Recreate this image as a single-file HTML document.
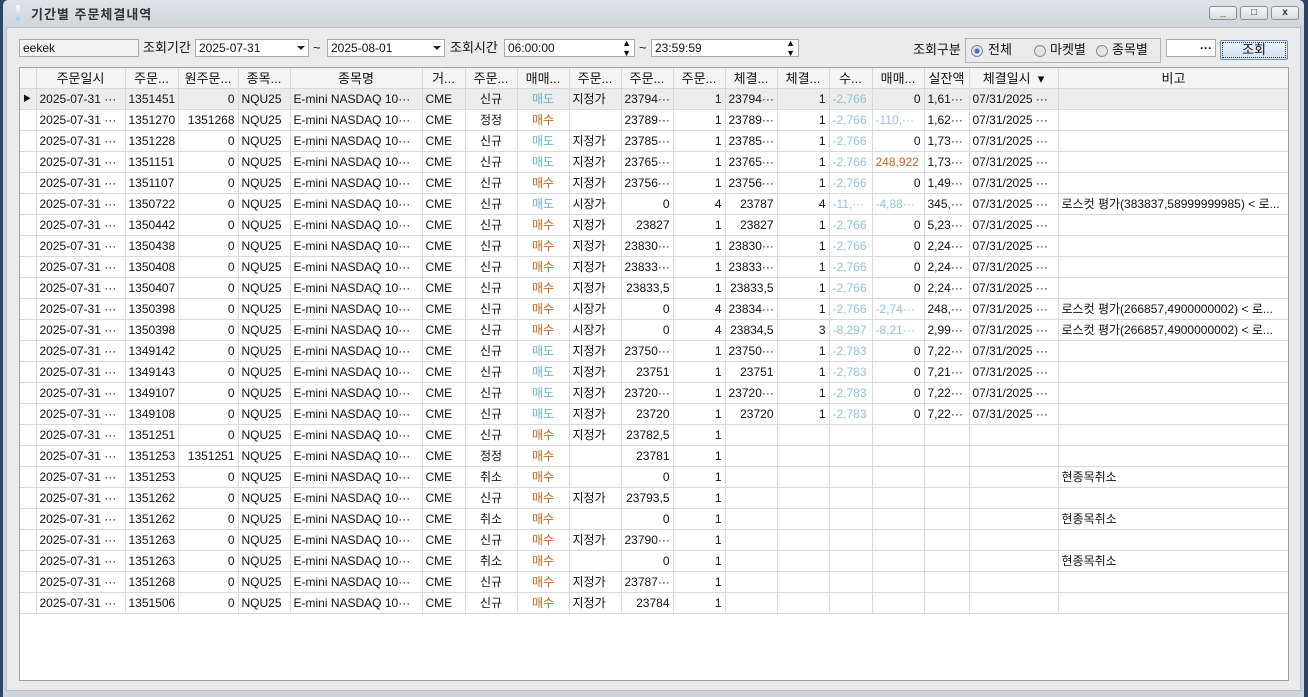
<!DOCTYPE html>
<html><head><meta charset="utf-8"><style>
*{box-sizing:border-box;margin:0;padding:0}
body{width:1308px;height:697px;overflow:hidden;background:#2c4467;font-family:"Liberation Sans","Noto Sans CJK KR",sans-serif;font-size:12px;color:#111;position:relative}
.win{position:absolute;left:3px;top:0;width:1301px;height:697px;background:linear-gradient(#dfe3e8,#cfd5dc 27px,#cfd5dc);border-radius:5px 5px 0 0}
.title{position:absolute;left:28px;top:4px;font-size:13px;font-weight:bold;color:#333;letter-spacing:1px}
.ico{position:absolute;left:13px;top:5px;width:4px;height:16px;background:linear-gradient(#fff,#9cc8ea);border-radius:2px}
.body{position:absolute;left:6px;top:27px;width:1295px;height:664px;background:#ebebeb;border:1px solid #b8bec6}
.wb{position:absolute;top:6px;width:28px;height:14px;border:1px solid #8a8f96;border-radius:3px;background:linear-gradient(#f4f5f6,#d8dbdf);font-size:10px;text-align:center;line-height:12px;color:#333;font-weight:bold}
.abs{position:absolute}
.inp{position:absolute;height:18px;border:1px solid #a8acb2;background:#fff;padding-left:3px;line-height:16px}
.lbl{position:absolute;font-size:13px;line-height:18px}
.dd{position:absolute;right:3px;top:6px;width:0;height:0;border-left:4px solid transparent;border-right:4px solid transparent;border-top:4px solid #222}
.grid{position:absolute;left:19px;top:67px;width:1270px;height:614px;background:#fff;border:1px solid #a0a0a0;overflow:hidden}
table{border-collapse:collapse;table-layout:fixed;width:1269px;margin-top:-1px}
td,th{height:21px;border-right:1px solid #d9d9d9;border-bottom:1px solid #d9d9d9;white-space:nowrap;overflow:hidden;padding:0 3px;font-weight:normal}
th{background:#f4f4f4;font-size:13px;height:21px;text-align:center}
td{text-align:left;font-size:12px}
.r{text-align:right}.c{text-align:center}
.b{color:#69b3d1}.o{color:#c8641e}.l{color:#8fc3d8}
tr.sel td{background:#ececec}
</style></head><body>
<div class="win">
<div class="ico"></div><div class="title">기간별 주문체결내역</div>
<div class="wb" style="left:1206px">_</div><div class="wb" style="left:1237px">□</div><div class="wb" style="left:1268px">x</div>
</div>
<div class="body"></div>
<div class="inp" style="left:19px;top:39px;width:120px;background:#f3f3f3">eekek</div>
<div class="lbl" style="left:143px;top:39px">조회기간</div>
<div class="inp" style="left:195px;top:39px;width:114px">2025-07-31<div class="dd"></div></div>
<div class="lbl" style="left:313px;top:39px">~</div>
<div class="inp" style="left:327px;top:39px;width:118px">2025-08-01<div class="dd"></div></div>
<div class="lbl" style="left:450px;top:39px">조회시간</div>
<div class="inp" style="left:504px;top:39px;width:131px">06:00:00<span class="abs" style="right:3px;top:-2px;font-size:9px;line-height:10px">▲<br>▼</span></div>
<div class="lbl" style="left:639px;top:39px">~</div>
<div class="inp" style="left:651px;top:39px;width:148px">23:59:59<span class="abs" style="right:3px;top:-2px;font-size:9px;line-height:10px">▲<br>▼</span></div>
<div class="lbl" style="left:913px;top:41px">조회구분</div>
<div class="abs" style="left:965px;top:38px;width:196px;height:25px;border:1px solid #b0b4ba;background:#ebebeb"></div>
<div class="abs" style="left:971px;top:45px;width:12px;height:12px;border-radius:50%;border:1px solid #7a8594;background:radial-gradient(#3d6fc0 2px,#dfe6f2 3px)"></div>
<div class="lbl" style="left:988px;top:41px">전체</div>
<div class="abs" style="left:1034px;top:45px;width:12px;height:12px;border-radius:50%;border:1px solid #8a8f96;background:#e4e4e4"></div>
<div class="lbl" style="left:1050px;top:41px">마켓별</div>
<div class="abs" style="left:1096px;top:45px;width:12px;height:12px;border-radius:50%;border:1px solid #8a8f96;background:#e4e4e4"></div>
<div class="lbl" style="left:1112px;top:41px">종목별</div>
<div class="inp" style="left:1166px;top:39px;width:50px;text-align:right;padding-right:3px;font-weight:bold">···</div>
<div class="abs" style="left:1220px;top:40px;width:68px;height:20px;border:1px solid #6f8fb5;border-radius:2px;background:linear-gradient(#eef4fb,#d3e0f0);text-align:center;font-size:13px;line-height:18px;outline:1px dotted #333;outline-offset:-3px">조회</div>
<div class="grid"><table>
<colgroup><col style="width:16px"><col style="width:89px"><col style="width:53px"><col style="width:60px"><col style="width:52px"><col style="width:132px"><col style="width:43px"><col style="width:52px"><col style="width:52px"><col style="width:52px"><col style="width:52px"><col style="width:52px"><col style="width:52px"><col style="width:52px"><col style="width:43px"><col style="width:52px"><col style="width:45px"><col style="width:89px"><col style="width:231px"></colgroup>
<tr><th></th><th>주문일시</th><th>주문...</th><th>원주문...</th><th>종목...</th><th>종목명</th><th>거...</th><th>주문...</th><th>매매...</th><th>주문...</th><th>주문...</th><th>주문...</th><th>체결...</th><th>체결...</th><th>수...</th><th>매매...</th><th>실잔액</th><th>체결일시 &nbsp;▾</th><th>비고</th></tr>
<tr class="sel"><td style="font-size:8px">▶</td><td>2025-07-31 ···</td><td>1351451</td><td class="r">0</td><td>NQU25</td><td>E-mini NASDAQ 10···</td><td>CME</td><td class="c">신규</td><td class="c b">매도</td><td>지정가</td><td>23794···</td><td class="r">1</td><td>23794···</td><td class="r">1</td><td class="l">-2,766</td><td class="r">0</td><td>1,61···</td><td>07/31/2025 ···</td><td></td></tr>
<tr><td></td><td>2025-07-31 ···</td><td>1351270</td><td class="r">1351268</td><td>NQU25</td><td>E-mini NASDAQ 10···</td><td>CME</td><td class="c">정정</td><td class="c o">매수</td><td></td><td class="r">23789···</td><td class="r">1</td><td>23789···</td><td class="r">1</td><td class="l">-2,766</td><td class="l">-110,···</td><td>1,62···</td><td>07/31/2025 ···</td><td></td></tr>
<tr><td></td><td>2025-07-31 ···</td><td>1351228</td><td class="r">0</td><td>NQU25</td><td>E-mini NASDAQ 10···</td><td>CME</td><td class="c">신규</td><td class="c b">매도</td><td>지정가</td><td>23785···</td><td class="r">1</td><td>23785···</td><td class="r">1</td><td class="l">-2,766</td><td class="r">0</td><td>1,73···</td><td>07/31/2025 ···</td><td></td></tr>
<tr><td></td><td>2025-07-31 ···</td><td>1351151</td><td class="r">0</td><td>NQU25</td><td>E-mini NASDAQ 10···</td><td>CME</td><td class="c">신규</td><td class="c b">매도</td><td>지정가</td><td>23765···</td><td class="r">1</td><td>23765···</td><td class="r">1</td><td class="l">-2,766</td><td class="o">248,922</td><td>1,73···</td><td>07/31/2025 ···</td><td></td></tr>
<tr><td></td><td>2025-07-31 ···</td><td>1351107</td><td class="r">0</td><td>NQU25</td><td>E-mini NASDAQ 10···</td><td>CME</td><td class="c">신규</td><td class="c o">매수</td><td>지정가</td><td>23756···</td><td class="r">1</td><td>23756···</td><td class="r">1</td><td class="l">-2,766</td><td class="r">0</td><td>1,49···</td><td>07/31/2025 ···</td><td></td></tr>
<tr><td></td><td>2025-07-31 ···</td><td>1350722</td><td class="r">0</td><td>NQU25</td><td>E-mini NASDAQ 10···</td><td>CME</td><td class="c">신규</td><td class="c b">매도</td><td>시장가</td><td class="r">0</td><td class="r">4</td><td class="r">23787</td><td class="r">4</td><td class="l">-11,···</td><td class="l">-4,88···</td><td>345,···</td><td>07/31/2025 ···</td><td>로스컷 평가(383837,58999999985) &lt; 로...</td></tr>
<tr><td></td><td>2025-07-31 ···</td><td>1350442</td><td class="r">0</td><td>NQU25</td><td>E-mini NASDAQ 10···</td><td>CME</td><td class="c">신규</td><td class="c o">매수</td><td>지정가</td><td class="r">23827</td><td class="r">1</td><td class="r">23827</td><td class="r">1</td><td class="l">-2,766</td><td class="r">0</td><td>5,23···</td><td>07/31/2025 ···</td><td></td></tr>
<tr><td></td><td>2025-07-31 ···</td><td>1350438</td><td class="r">0</td><td>NQU25</td><td>E-mini NASDAQ 10···</td><td>CME</td><td class="c">신규</td><td class="c o">매수</td><td>지정가</td><td>23830···</td><td class="r">1</td><td>23830···</td><td class="r">1</td><td class="l">-2,766</td><td class="r">0</td><td>2,24···</td><td>07/31/2025 ···</td><td></td></tr>
<tr><td></td><td>2025-07-31 ···</td><td>1350408</td><td class="r">0</td><td>NQU25</td><td>E-mini NASDAQ 10···</td><td>CME</td><td class="c">신규</td><td class="c o">매수</td><td>지정가</td><td>23833···</td><td class="r">1</td><td>23833···</td><td class="r">1</td><td class="l">-2,766</td><td class="r">0</td><td>2,24···</td><td>07/31/2025 ···</td><td></td></tr>
<tr><td></td><td>2025-07-31 ···</td><td>1350407</td><td class="r">0</td><td>NQU25</td><td>E-mini NASDAQ 10···</td><td>CME</td><td class="c">신규</td><td class="c o">매수</td><td>지정가</td><td class="r">23833,5</td><td class="r">1</td><td class="r">23833,5</td><td class="r">1</td><td class="l">-2,766</td><td class="r">0</td><td>2,24···</td><td>07/31/2025 ···</td><td></td></tr>
<tr><td></td><td>2025-07-31 ···</td><td>1350398</td><td class="r">0</td><td>NQU25</td><td>E-mini NASDAQ 10···</td><td>CME</td><td class="c">신규</td><td class="c o">매수</td><td>시장가</td><td class="r">0</td><td class="r">4</td><td>23834···</td><td class="r">1</td><td class="l">-2,766</td><td class="l">-2,74···</td><td>248,···</td><td>07/31/2025 ···</td><td>로스컷 평가(266857,4900000002) &lt; 로...</td></tr>
<tr><td></td><td>2025-07-31 ···</td><td>1350398</td><td class="r">0</td><td>NQU25</td><td>E-mini NASDAQ 10···</td><td>CME</td><td class="c">신규</td><td class="c o">매수</td><td>시장가</td><td class="r">0</td><td class="r">4</td><td class="r">23834,5</td><td class="r">3</td><td class="l">-8,297</td><td class="l">-8,21···</td><td>2,99···</td><td>07/31/2025 ···</td><td>로스컷 평가(266857,4900000002) &lt; 로...</td></tr>
<tr><td></td><td>2025-07-31 ···</td><td>1349142</td><td class="r">0</td><td>NQU25</td><td>E-mini NASDAQ 10···</td><td>CME</td><td class="c">신규</td><td class="c b">매도</td><td>지정가</td><td>23750···</td><td class="r">1</td><td>23750···</td><td class="r">1</td><td class="l">-2,783</td><td class="r">0</td><td>7,22···</td><td>07/31/2025 ···</td><td></td></tr>
<tr><td></td><td>2025-07-31 ···</td><td>1349143</td><td class="r">0</td><td>NQU25</td><td>E-mini NASDAQ 10···</td><td>CME</td><td class="c">신규</td><td class="c b">매도</td><td>지정가</td><td class="r">23751</td><td class="r">1</td><td class="r">23751</td><td class="r">1</td><td class="l">-2,783</td><td class="r">0</td><td>7,21···</td><td>07/31/2025 ···</td><td></td></tr>
<tr><td></td><td>2025-07-31 ···</td><td>1349107</td><td class="r">0</td><td>NQU25</td><td>E-mini NASDAQ 10···</td><td>CME</td><td class="c">신규</td><td class="c b">매도</td><td>지정가</td><td>23720···</td><td class="r">1</td><td>23720···</td><td class="r">1</td><td class="l">-2,783</td><td class="r">0</td><td>7,22···</td><td>07/31/2025 ···</td><td></td></tr>
<tr><td></td><td>2025-07-31 ···</td><td>1349108</td><td class="r">0</td><td>NQU25</td><td>E-mini NASDAQ 10···</td><td>CME</td><td class="c">신규</td><td class="c b">매도</td><td>지정가</td><td class="r">23720</td><td class="r">1</td><td class="r">23720</td><td class="r">1</td><td class="l">-2,783</td><td class="r">0</td><td>7,22···</td><td>07/31/2025 ···</td><td></td></tr>
<tr><td></td><td>2025-07-31 ···</td><td>1351251</td><td class="r">0</td><td>NQU25</td><td>E-mini NASDAQ 10···</td><td>CME</td><td class="c">신규</td><td class="c o">매수</td><td>지정가</td><td class="r">23782,5</td><td class="r">1</td><td></td><td></td><td></td><td></td><td></td><td></td><td></td></tr>
<tr><td></td><td>2025-07-31 ···</td><td>1351253</td><td class="r">1351251</td><td>NQU25</td><td>E-mini NASDAQ 10···</td><td>CME</td><td class="c">정정</td><td class="c o">매수</td><td></td><td class="r">23781</td><td class="r">1</td><td></td><td></td><td></td><td></td><td></td><td></td><td></td></tr>
<tr><td></td><td>2025-07-31 ···</td><td>1351253</td><td class="r">0</td><td>NQU25</td><td>E-mini NASDAQ 10···</td><td>CME</td><td class="c">취소</td><td class="c o">매수</td><td></td><td class="r">0</td><td class="r">1</td><td></td><td></td><td></td><td></td><td></td><td></td><td>현종목취소</td></tr>
<tr><td></td><td>2025-07-31 ···</td><td>1351262</td><td class="r">0</td><td>NQU25</td><td>E-mini NASDAQ 10···</td><td>CME</td><td class="c">신규</td><td class="c o">매수</td><td>지정가</td><td class="r">23793,5</td><td class="r">1</td><td></td><td></td><td></td><td></td><td></td><td></td><td></td></tr>
<tr><td></td><td>2025-07-31 ···</td><td>1351262</td><td class="r">0</td><td>NQU25</td><td>E-mini NASDAQ 10···</td><td>CME</td><td class="c">취소</td><td class="c o">매수</td><td></td><td class="r">0</td><td class="r">1</td><td></td><td></td><td></td><td></td><td></td><td></td><td>현종목취소</td></tr>
<tr><td></td><td>2025-07-31 ···</td><td>1351263</td><td class="r">0</td><td>NQU25</td><td>E-mini NASDAQ 10···</td><td>CME</td><td class="c">신규</td><td class="c o">매수</td><td>지정가</td><td>23790···</td><td class="r">1</td><td></td><td></td><td></td><td></td><td></td><td></td><td></td></tr>
<tr><td></td><td>2025-07-31 ···</td><td>1351263</td><td class="r">0</td><td>NQU25</td><td>E-mini NASDAQ 10···</td><td>CME</td><td class="c">취소</td><td class="c o">매수</td><td></td><td class="r">0</td><td class="r">1</td><td></td><td></td><td></td><td></td><td></td><td></td><td>현종목취소</td></tr>
<tr><td></td><td>2025-07-31 ···</td><td>1351268</td><td class="r">0</td><td>NQU25</td><td>E-mini NASDAQ 10···</td><td>CME</td><td class="c">신규</td><td class="c o">매수</td><td>지정가</td><td>23787···</td><td class="r">1</td><td></td><td></td><td></td><td></td><td></td><td></td><td></td></tr>
<tr><td></td><td>2025-07-31 ···</td><td>1351506</td><td class="r">0</td><td>NQU25</td><td>E-mini NASDAQ 10···</td><td>CME</td><td class="c">신규</td><td class="c o">매수</td><td>지정가</td><td class="r">23784</td><td class="r">1</td><td></td><td></td><td></td><td></td><td></td><td></td><td></td></tr>
</table></div>
</body></html>
